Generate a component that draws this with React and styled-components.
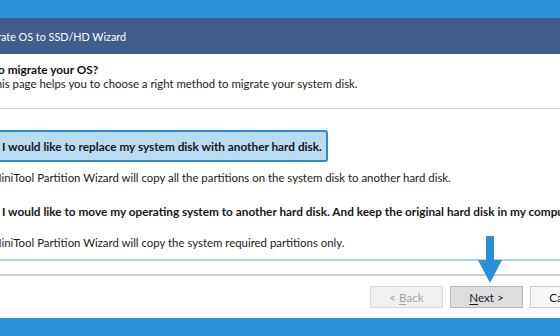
import React from "react";
import styled, { createGlobalStyle } from "styled-components";

const Global = createGlobalStyle`
  html, body { margin: 0; padding: 0; background: #ffffff; overflow: hidden; }
  * { box-sizing: border-box; }
`;

const FONT = `Lato, "Open Sans", "Liberation Sans", sans-serif`;

const Page = styled.div`
  position: relative;
  width: 560px;
  height: 336px;
  overflow: hidden;
  display: flex;
  flex-direction: column;
  font-family: ${FONT};
  font-size: 11.4px;
  color: #1b1b1b;
  background: #ffffff;
`;

const Band = styled.div`
  flex: 0 0 ${(p) => p.$h}px;
  background: #2a93d5;
`;

const Window = styled.div`
  flex: 1;
  margin-left: -40px;
  width: 660px;
  display: flex;
  flex-direction: column;
  background: #ffffff;
`;

const TitleBar = styled.div`
  height: 36px;
  flex: 0 0 36px;
  background: #405d8b;
  color: #ffffff;
  display: flex;
  align-items: center;
  padding-left: 19px;
  font-size: 10.8px;
  white-space: nowrap;
`;

const Header = styled.div`
  flex: 0 0 54px;
  padding-top: 9px;
  display: flex;
  flex-direction: column;
  white-space: nowrap;
`;

const Heading = styled.div`
  font-weight: 700;
  font-size: 11.8px;
  line-height: 14px;
  padding-left: 6px;
  color: #111;
`;

const Subtitle = styled.div`
  line-height: 14px;
  padding-left: 29px;
  color: #1b1b1b;
`;

const Rule = styled.div`
  flex: 0 0 ${(p) => p.$t}px;
  background: ${(p) => p.$c};
`;

const Body = styled.div`
  flex: 0 0 150px;
  padding-top: 21px;
  display: flex;
  flex-direction: column;
  align-items: flex-start;
  white-space: nowrap;
`;

const Option = styled.div`
  height: 32px;
  display: flex;
  align-items: center;
  margin-left: 10px;
  margin-top: ${(p) => (p.$first ? 0 : 9)}px;
  padding: 0 4px 0 30px;
  border: 2px solid ${(p) => (p.$selected ? "#2b8ad6" : "transparent")};
  border-radius: 3px;
  background: ${(p) => (p.$selected ? "#b9dcf3" : "transparent")};
  font-weight: 700;
  font-size: 11.8px;
  color: #161616;
`;

const Desc = styled.div`
  margin-top: 8px;
  line-height: 16px;
  padding-left: 31px;
  color: #1b1b1b;
`;

const Spacer = styled.div`
  flex: 0 0 ${(p) => p.$h}px;
`;

const ButtonRow = styled.div`
  flex: 0 0 42px;
  display: flex;
  justify-content: flex-end;
  align-items: flex-start;
  gap: 7px;
  padding-top: 10px;
  padding-right: 17px;
`;

const Button = styled.div`
  width: 73px;
  height: 22px;
  display: flex;
  align-items: center;
  justify-content: center;
  font-size: 11.6px;
  border: 1px solid ${(p) => p.$border};
  background: ${(p) => p.$bg};
  color: ${(p) => p.$color};
  white-space: pre;
  u { text-decoration: underline; text-underline-offset: 2px; }
`;

const Arrow = styled.svg`
  position: absolute;
  left: 478px;
  top: 236px;
`;

export default function App() {
  return (
    <Page>
      <Global />
      <Band $h={18} />
      <Window>
        <TitleBar>Migrate OS to SSD/HD Wizard</TitleBar>
        <Header>
          <Heading>How to migrate your OS?</Heading>
          <Subtitle>This page helps you to choose a right method to migrate your system disk.</Subtitle>
        </Header>
        <Rule $t={1} $c="#cfcfcf" />
        <Body>
          <Option $first $selected>I would like to replace my system disk with another hard disk.</Option>
          <Desc>MiniTool Partition Wizard will copy all the partitions on the system disk to another hard disk.</Desc>
          <Option>I would like to move my operating system to another hard disk. And keep the original hard disk in my computer.</Option>
          <Desc>MiniTool Partition Wizard will copy the system required partitions only.</Desc>
        </Body>
        <Rule $t={2} $c="#a9d3f0" />
        <Spacer $h={13} />
        <Rule $t={2} $c="#cdcdcd" />
        <ButtonRow>
          <Button $bg="#f0f0f0" $border="#d9d9d9" $color="#a3a3a3"><span>&lt; <u>B</u>ack</span></Button>
          <Button $bg="#dddddd" $border="#b9b9b9" $color="#1b1b1b"><span><u>N</u>ext &gt;</span></Button>
          <Button $bg="#f7f7f7" $border="#c9c9c9" $color="#1b1b1b"><span>Cancel</span></Button>
        </ButtonRow>
      </Window>
      <Band $h={19} />
      <Arrow width="24" height="48" viewBox="0 0 24 48">
        <rect x="8" y="0" width="8" height="25" fill="#2a8fd6" />
        <polygon points="0,24 24,24 12,47" fill="#2a8fd6" />
      </Arrow>
    </Page>
  );
}
